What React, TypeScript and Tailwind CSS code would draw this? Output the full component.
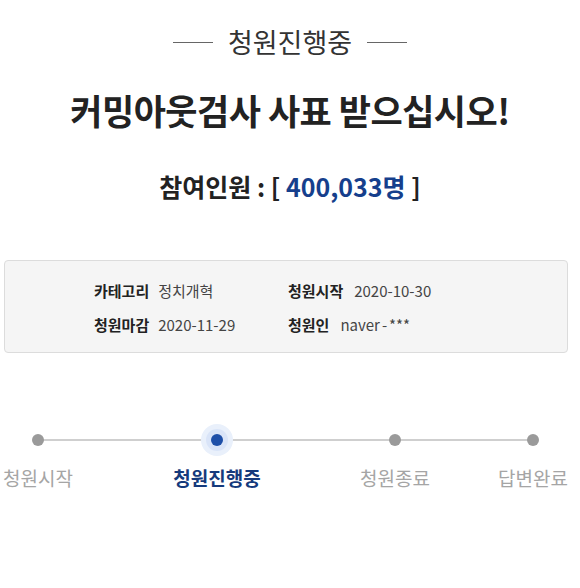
import React from "react";

const font = { fontFamily: '"Noto Sans CJK KR", "Noto Sans", sans-serif' };

function Dot({ active }: { active?: boolean }) {
  if (active) {
    return (
      <div className="relative flex h-[12px] w-[12px] items-center justify-center">
        <div className="absolute h-[32px] w-[32px] rounded-full bg-[#e9f0fb]" />
        <div className="absolute h-[22px] w-[22px] rounded-full bg-[#d9e4f8]" />
        <div className="relative h-[12px] w-[12px] rounded-full bg-[#1d4fa8]" />
      </div>
    );
  }
  return <div className="h-[12px] w-[12px] rounded-full bg-[#9a9a9a]" />;
}

export default function App() {
  const steps = [
    { label: "청원시작", x: 38 },
    { label: "청원진행중", x: 217, active: true },
    { label: "청원종료", x: 395 },
    { label: "답변완료", x: 533 },
  ];
  return (
    <div className="h-[588px] w-[580px] bg-white text-[#333]" style={font}>
      <div className="flex items-center justify-center gap-[15px] pt-[25px]">
        <div className="h-px w-[40px] bg-[#666]" />
        <div className="text-[27px] leading-[34px] text-[#333]">청원진행중</div>
        <div className="h-px w-[40px] bg-[#666]" />
      </div>
      <div className="mt-[29px] text-center text-[35px] font-bold leading-[44px] tracking-[-0.5px] text-[#222]">
        커밍아웃검사 사표 받으십시오!
      </div>
      <div className="mt-[37px] text-center text-[25px] font-bold leading-[34px] text-[#222]">
        참여인원 : [ <span className="text-[#163f8c]">400,033명</span> ]
      </div>
      <div className="mx-[4px] mt-[57px] h-[93px] w-[564px] rounded-[4px] border border-[#dcdcdc] bg-[#f5f5f5] pl-[89px] pt-[20px] text-[15px] leading-[20px]">
        <div className="grid grid-cols-[194px_auto] gap-y-[14px]">
          <div className="flex gap-[9px]">
            <span className="font-bold text-[#222]">카테고리</span>
            <span className="text-[#444]">정치개혁</span>
          </div>
          <div className="flex gap-[11px]">
            <span className="font-bold text-[#222]">청원시작</span>
            <span className="text-[#444]">2020-10-30</span>
          </div>
          <div className="flex gap-[9px]">
            <span className="font-bold text-[#222]">청원마감</span>
            <span className="text-[#444]">2020-11-29</span>
          </div>
          <div className="flex gap-[11px]">
            <span className="font-bold text-[#222]">청원인</span>
            <span className="text-[#444]">
              naver<span className="mx-[2px]">-</span>***
            </span>
          </div>
        </div>
      </div>
      <div className="relative mt-[79px] h-[80px] w-[580px]">
        <div className="absolute left-[38px] top-[7px] h-[2px] w-[495px] bg-[#cfcfcf]" />
        {steps.map((s) => (
          <div
            key={s.label}
            className="absolute top-0 flex w-[130px] -translate-x-1/2 flex-col items-center"
            style={{ left: s.x }}
          >
            <div className="mt-[2px]">
              <Dot active={s.active} />
            </div>
            <div
              className={
                "mt-[19px] whitespace-nowrap text-[19px] leading-[26px] " +
                (s.active ? "font-bold text-[#153a7c]" : "text-[#a5a5a5]")
              }
            >
              {s.label}
            </div>
          </div>
        ))}
      </div>
    </div>
  );
}
